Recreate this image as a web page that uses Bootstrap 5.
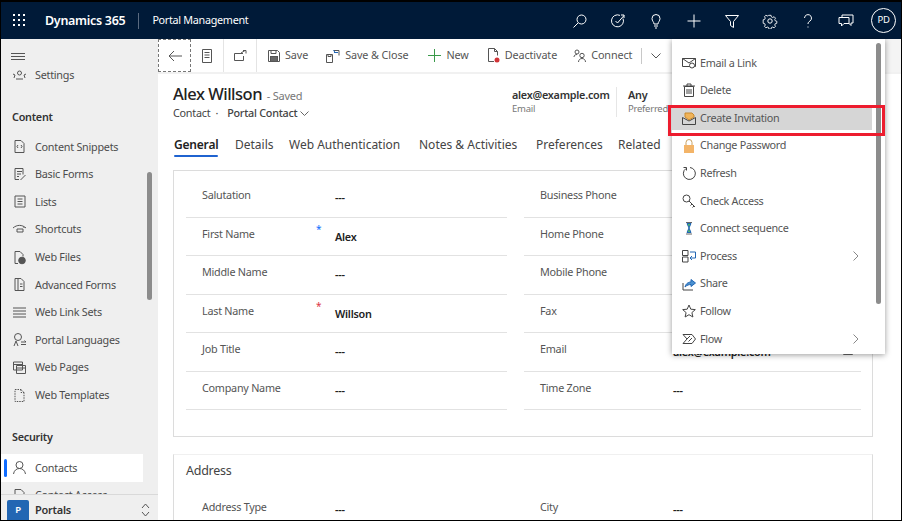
<!DOCTYPE html>
<html lang="en"><head><meta charset="utf-8"><title>Contact</title>
<link href="https://cdn.jsdelivr.net/npm/bootstrap@5.3.0/dist/css/bootstrap.min.css" rel="stylesheet">
<style>
html,body{height:100%;margin:0;overflow:hidden}
body{font-family:"Noto Sans","Open Sans",sans-serif;font-size:11px;color:#444;background:#000;letter-spacing:-.25px}
svg{display:block;flex:none;fill:none;stroke:currentColor;stroke-width:1}
.app-frame{position:relative;width:900px;height:518px;margin:2px 0 0 1px;background:#fff;overflow:hidden;display:flex;flex-direction:column}
.top-bar{height:37px;background:#001a38;color:#fff;flex:none;padding-left:12px}
.waffle{width:13px;height:13px;margin-right:19px}
.brand{font-size:12.5px;font-weight:600;padding-right:13px;border-right:1px solid #5a6a80;line-height:16px;letter-spacing:-.3px}
.app-name{font-size:10.8px;padding-left:13px;letter-spacing:-.3px}
.top-icons{margin-left:auto;padding-right:5px}
.top-btn{width:38px;display:flex;justify-content:center;color:#fff}
.avatar{width:25px;height:25px;border:1px solid #fff;border-radius:50%;font-size:9.5px;margin-left:6px}
.body-row{flex:1;min-height:0}
.side-nav{width:157px;background:#efefef;flex:none;position:relative;display:flex;flex-direction:column}
.burger{height:31px;padding:14px 0 0 10px;flex:none;color:#555;background:#efefef}
.nav-scroll{flex:1;min-height:0;overflow:hidden}
.nav-row{height:27.6px;display:flex;align-items:center;padding-left:11px;color:#4c4c4c;font-size:10.8px;gap:8px;width:142px;position:relative}
.nav-row svg{width:15px;height:15px;color:#555}
.nav-head{font-weight:600;color:#333;font-size:10.8px;padding-left:11px;height:14px;line-height:14px}
.mt-head-a{margin-top:22px;margin-bottom:9px}
.mt-head-b{margin-top:21px;margin-bottom:10px}
.nav-active{background:#fff}
.nav-active::before{content:"";position:absolute;left:3px;top:5px;bottom:5px;width:3px;background:#0f6cff;border-radius:2px}
.settings-row{margin-top:-8px;height:26px}
.side-foot{height:26px;flex:none;border-top:1px solid #d9d9d9;background:#efefef;display:flex;align-items:flex-end;padding-left:6px;font-weight:600;font-size:11px;color:#333}
.foot-label{line-height:20px}
.area-tile{width:22px;height:20px;background:#2266b3;color:#fff;font-size:9.5px;display:flex;align-items:center;justify-content:center;border-radius:2px 2px 0 0;margin-right:6px}
.foot-chev{margin-left:auto;margin-right:8px;margin-bottom:3px;color:#555}
.side-thumb{position:absolute;left:146px;top:133px;width:5px;height:128px;background:#8c8c8c;border-radius:3px}
.main-pane{flex:1;min-width:0;position:relative;background:#fff}
.cmd-bar{height:33px;border-bottom:2px solid #f1f1f1;box-sizing:content-box;color:#555;font-size:10.8px;letter-spacing:-.1px}
.cmd-icon{width:33px;height:33px;border-right:1px solid #e4e4e4;justify-content:center;align-items:center;display:flex}
.cmd-back{border:1px dashed #777}
.cmd-item{display:flex;align-items:center;gap:5px;white-space:nowrap;margin-left:18px}
.cmd-first{margin-left:11px}
.cmd-new{margin-left:20px}
.cmd-conn{margin-left:16px}
.cmd-sep{margin-left:9px;width:1px;height:16px;background:#c8c8c8}
.cmd-chev{margin-left:9px}
.rec-head{padding:9px 0 0 15px;height:60px;position:relative}
.rec-title{font-size:16.5px;font-weight:500;color:#222;line-height:22px;letter-spacing:-.5px}
.rec-saved{font-size:11px;color:#777;font-weight:400;margin-left:1px;letter-spacing:-.25px}
.rec-sub{font-size:10.8px;color:#444;line-height:16px;margin-top:-2px}
.rec-form-name{margin-left:4px;font-weight:500}
.rec-fields{position:absolute;left:354px;top:13px;display:flex}
.rec-mail{width:105px;border-right:1px solid #e6e6e6;height:30px}
.rec-pref{padding-left:11px}
.rec-val{font-weight:600;font-size:10.8px;color:#333;line-height:15px}
.rec-lab{font-size:9.5px;color:#777;line-height:13px}
.chev-sub{display:inline-block;vertical-align:1px;color:#666}
.tab-row{height:26px;padding-left:16px;font-size:12px;color:#444;position:relative;white-space:nowrap;line-height:21px;letter-spacing:0}
.tab-on{font-weight:600;color:#222;height:23px;width:44px;position:relative;letter-spacing:-.2px}
.tab-on::after{content:"";position:absolute;left:0;right:0;bottom:0;height:2px;background:#1f63d0;border-radius:1px}
.tab-a{margin-left:17px;width:54px}.tab-b{width:130px}.tab-c{width:117px}.tab-d{width:82px}
.form-area{padding:10px 28px 0 15px}
.form-box{border:1px solid #dcdcdc;display:flex;gap:17px;padding:8px 12px 26px 12px;height:267px}
.col-left{flex:none;width:321px}
.col-right{flex:none;width:337px}
.form-row{height:38.5px;border-bottom:1px solid #e2e2e2;display:flex;padding-top:8px;font-size:10.8px;color:#555;position:relative}
.form-lab{width:149px;padding-left:16px;flex:none;line-height:16px}
.form-val{color:#222;font-weight:600;padding-top:3px;line-height:16px}
.req{position:absolute;left:130px;top:4px;font-size:10px;line-height:14px}
.mail-ico{margin:6px 8px 0 auto;color:#666}
.addr-box{margin-top:17px;border:1px solid #dcdcdc;border-top-color:#f0f0f0;height:80px;padding:7px 12px}
.addr-title{font-size:12.5px;color:#444;line-height:18px;margin-bottom:19px}
.addr-row{gap:17px;font-size:10.8px;color:#555}
.menu-pop{position:absolute;left:671px;top:37px;width:213px;height:315px;background:#fff;box-shadow:0 1px 6px rgba(0,0,0,.4);padding-top:10px;z-index:5;color:#555;font-size:10.8px;letter-spacing:-.3px}
.menu-row{height:27.6px;display:flex;align-items:center;padding-left:10px;gap:4px;width:200px;position:relative}
.menu-row svg.mi{width:14px;height:14px;color:#444}
.menu-sel{background:linear-gradient(#d6d6d6,#d6d6d6) no-repeat 0 50%/100% 24px}
.menu-hl{position:absolute;left:-4px;top:66px;width:217px;height:31px;border:3px solid #ed1c2e;z-index:6;pointer-events:none}
.menu-chev{position:absolute;right:13px;top:9px;color:#888}
.menu-thumb{position:absolute;left:204px;top:4px;width:5px;height:261px;background:#8c8c8c;border-radius:3px}
.right-strip{position:absolute;left:727px;top:0;width:20px;height:33px;background:#f4f4f4;z-index:1}
</style></head>
<body>
<div class="app-frame">
 <header class="top-bar d-flex align-items-center">
  <svg class="waffle" viewBox="0 0 13 13"><g fill="#fff" stroke="none"><rect x="0" y="0" width="2" height="2"/><rect x="5" y="0" width="2" height="2"/><rect x="10" y="0" width="2" height="2"/><rect x="0" y="5" width="2" height="2"/><rect x="5" y="5" width="2" height="2"/><rect x="10" y="5" width="2" height="2"/><rect x="0" y="10" width="2" height="2"/><rect x="5" y="10" width="2" height="2"/><rect x="10" y="10" width="2" height="2"/></g></svg>
  <span class="brand">Dynamics 365</span><span class="app-name">Portal Management</span>
  <div class="top-icons d-flex align-items-center">
   <span class="top-btn"><svg width="16" height="16" viewBox="0 0 16 16"><circle cx="9.500" cy="6.500" r="4.500"/><path d="M6 10l-4.500 4.500"/></svg></span>
   <span class="top-btn"><svg width="16" height="16" viewBox="0 0 16 16"><path d="M13 5.500A6 6 0 1 1 10 2.400"/><path d="M5.500 8l2 2L14 2.500"/><path d="M11 2h3v3"/></svg></span>
   <span class="top-btn"><svg width="16" height="16" viewBox="0 0 16 16"><path d="M6 11c0-2-2-3-2-5.500a4 4 0 0 1 8 0c0 2.500-2 3.500-2 5.500zM6 13h4M7 15h2"/></svg></span>
   <span class="top-btn"><svg width="16" height="16" viewBox="0 0 16 16"><path d="M8 1.500v13M1.500 8h13"/></svg></span>
   <span class="top-btn"><svg width="16" height="16" viewBox="0 0 16 16"><path d="M1.500 2.500h13L9.500 8.500v6l-3-2v-4z"/></svg></span>
   <span class="top-btn"><svg width="16" height="16" viewBox="0 0 16 16"><circle cx="8" cy="8" r="2.200"/><path d="M6.800 1.500h2.400l.4 1.800 1.500.7 1.600-.9 1.600 1.700-.9 1.500.6 1.500 1.800.5v2.300l-1.800.5-.6 1.500.9 1.500-1.600 1.700-1.600-.9-1.500.6-.4 1.800H6.800l-.4-1.800-1.500-.6-1.600.9-1.600-1.700.9-1.500-.6-1.500-1.800-.5V6.600l1.800-.5.600-1.500-.9-1.500 1.600-1.700 1.600.9 1.500-.7z" transform="translate(1 1) scale(.875)"/></svg></span>
   <span class="top-btn"><svg width="16" height="16" viewBox="0 0 16 16"><path d="M4.500 5a3.500 3.500 0 1 1 5.500 3C8.800 8.800 8 9.500 8 11M8 13.500v1"/></svg></span>
   <span class="top-btn"><svg width="16" height="16" viewBox="0 0 16 16" stroke-width="1.300"><path d="M4 4.500V2h11v8h-2v2.500L10.500 10"/><path d="M1 4.500h10v6H6L3.500 13v-2.500H1z"/></svg></span>
   <span class="avatar d-flex align-items-center justify-content-center">PD</span>
  </div>
 </header>
 <div class="body-row d-flex">
  <nav class="side-nav">
   <div class="burger"><svg width="14" height="7" viewBox="0 0 14 7"><path d="M0 .5h14M0 3.500h14M0 6.500h14"/></svg></div>
   <div class="nav-scroll">
    <div class="nav-row settings-row"><svg viewBox="0 0 15 15"><circle cx="7.500" cy="5" r="2"/><path d="M1 6l2 1-1 3M14 6l-2 1 1 3M4 11h7"/></svg>Settings</div>
    <div class="nav-head mt-head-a">Content</div>
    <div class="nav-row"><svg viewBox="0 0 15 15"><path d="M3 1.500h6l3 3v9H3zM6 6L5 7.500 6 9M9 6l1 1.500L9 9"/></svg>Content Snippets</div>
    <div class="nav-row"><svg viewBox="0 0 15 15"><path d="M3 1.500h8v6M3 1.500v11h4M5 4.500h5M5 7h4M5 9.500h2M8.500 13l5-5"/></svg>Basic Forms</div>
    <div class="nav-row"><svg viewBox="0 0 15 15"><path d="M3 2h10v11H3zM5.500 5h5M5.500 7.500h5M5.500 10h5"/></svg>Lists</div>
    <div class="nav-row"><svg viewBox="0 0 15 15"><path d="M1 6c4-3.500 9-3.500 13 0M5 7h6v3H5zM12 5v1"/></svg>Shortcuts</div>
    <div class="nav-row"><svg viewBox="0 0 15 15"><path d="M6 13.500H3v-12h5l3 3v2"/><circle cx="10" cy="10.500" r="3.300" fill="#555"/></svg>Web Files</div>
    <div class="nav-row"><svg viewBox="0 0 15 15"><path d="M3 1.500h6l3 3v9H3zM6 1.500v12M8 7h2.500M8 9.500h2.500"/></svg>Advanced Forms</div>
    <div class="nav-row"><svg viewBox="0 0 15 15"><path d="M1 3h13M1 6h13M1 9h13M1 12h13"/></svg>Web Link Sets</div>
    <div class="nav-row"><svg viewBox="0 0 15 15"><circle cx="6" cy="5" r="3.500"/><path d="M2 14l2-5 2 5M9 10h5M9 12.500h5M12.500 8.500l1.500 1.500"/></svg>Portal Languages</div>
    <div class="nav-row"><svg viewBox="0 0 15 15"><path d="M1.500 2h9v8h-9zM1.500 4.500h9M4.500 5.500h9v8h-9zM4.500 8h9"/></svg>Web Pages</div>
    <div class="nav-row"><svg viewBox="0 0 15 15"><path d="M3 1.500h6l3 3v9H3zM9 1.500v3h3" stroke-dasharray="1.500 1"/></svg>Web Templates</div>
    <div class="nav-head mt-head-b">Security</div>
    <div class="nav-row nav-active"><svg viewBox="0 0 15 15"><circle cx="7.500" cy="5" r="3.500"/><path d="M1.500 14c.5-3.500 3-5.500 6-5.500s5.500 2 6 5.500"/></svg>Contacts</div>
    <div class="nav-row"><svg viewBox="0 0 15 15"><path d="M3 1.500h6l3 3v9H3z"/></svg>Contact Access</div>
   </div>
   <div class="side-thumb"></div>
   <div class="side-foot"><span class="area-tile">P</span><span class="foot-label">Portals</span>
    <svg class="foot-chev" width="9" height="14" viewBox="0 0 9 14"><path d="M1 5l3.500-4L8 5M1 9l3.500 4L8 9"/></svg></div>
  </nav>
  <main class="main-pane">
   <div class="right-strip"></div>
   <div class="cmd-bar d-flex align-items-center">
    <span class="cmd-icon cmd-back"><svg width="14" height="12" viewBox="0 0 14 12"><path d="M14 6H1M6 1L1 6l5 5"/></svg></span>
    <span class="cmd-icon"><svg width="10" height="14" viewBox="0 0 10 14"><path d="M.5.500h9v13h-9zM2.500 3.500h5M2.500 6h5M2.500 8.500h5"/></svg></span>
    <span class="cmd-icon"><svg width="13" height="11" viewBox="0 0 13 11"><path d="M9 3.500H.5v7h9V6M7 3l4-2.500M9 .5h3v3"/></svg></span>
    <div class="cmd-item cmd-first"><svg width="12" height="12" viewBox="0 0 12 12"><path d="M.5.500h9l2 2v9H.5zM3 .5v3h5v-3"/><rect x="2.500" y="6.500" width="7" height="5" fill="#666"/></svg>Save</div>
    <div class="cmd-item"><svg width="14" height="14" viewBox="0 0 14 14"><path d="M.5 5.500h6v8h-6zM2 5.500v2h3v-2M8 1.500h5v5"/><path d="M8 3.500h4M7.500 1l1.500 2.500" stroke="#2266b3"/></svg>Save &amp; Close</div>
    <div class="cmd-item cmd-new"><svg width="13" height="13" viewBox="0 0 13 13"><path d="M6.500 0v13M0 6.500h13" stroke="#3a9a4a"/></svg>New</div>
    <div class="cmd-item"><svg width="13" height="15" viewBox="0 0 13 15"><path d="M7 13.500H1.500v-13h6l3 3v4M7.500.5v3h3"/><circle cx="10" cy="12" r="2.500" fill="#d13438" stroke="none"/></svg>Deactivate</div>
    <div class="cmd-item cmd-conn"><svg width="13" height="13" viewBox="0 0 13 13"><circle cx="4" cy="3" r="2"/><circle cx="9" cy="6.500" r="2.200"/><path d="M1 8c0-1.500 1-2.500 3-2.500M5.500 13c0-2 1.500-3.500 3.500-3.500s3.500 1.500 3.500 3.500"/></svg>Connect</div>
    <span class="cmd-sep"></span>
    <svg class="cmd-chev" width="10" height="6" viewBox="0 0 10 6"><path d="M.5.500L5 5 9.500.5"/></svg>
   </div>
   <div class="rec-head">
    <div class="rec-title">Alex Willson <span class="rec-saved">- Saved</span></div>
    <div class="rec-sub">Contact &nbsp;·&nbsp; <span class="rec-form-name">Portal Contact</span> <svg class="chev-sub" width="9" height="5" viewBox="0 0 9 5"><path d="M.5.500L4.500 4.500 8.500.5"/></svg></div>
    <div class="rec-fields">
     <div class="rec-mail"><div class="rec-val">alex@example.com</div><div class="rec-lab">Email</div></div>
     <div class="rec-pref"><div class="rec-val">Any</div><div class="rec-lab">Preferred</div></div>
    </div>
   </div>
   <div class="tab-row d-flex">
    <span class="tab-on">General</span>
    <span class="tab-a">Details</span>
    <span class="tab-b">Web Authentication</span>
    <span class="tab-c">Notes &amp; Activities</span>
    <span class="tab-d">Preferences</span>
    <span>Related</span>
   </div>
   <div class="form-area">
    <div class="form-box">
     <div class="col-left">
      <div class="form-row"><div class="form-lab">Salutation</div><div class="form-val">---</div></div>
      <div class="form-row"><div class="form-lab">First Name</div><span class="req text-primary">*</span><div class="form-val">Alex</div></div>
      <div class="form-row"><div class="form-lab">Middle Name</div><div class="form-val">---</div></div>
      <div class="form-row"><div class="form-lab">Last Name</div><span class="req text-danger">*</span><div class="form-val">Willson</div></div>
      <div class="form-row"><div class="form-lab">Job Title</div><div class="form-val">---</div></div>
      <div class="form-row"><div class="form-lab">Company Name</div><div class="form-val">---</div></div>
     </div>
     <div class="col-right">
      <div class="form-row"><div class="form-lab">Business Phone</div><div class="form-val">---</div></div>
      <div class="form-row"><div class="form-lab">Home Phone</div><div class="form-val">---</div></div>
      <div class="form-row"><div class="form-lab">Mobile Phone</div><div class="form-val">---</div></div>
      <div class="form-row"><div class="form-lab">Fax</div><div class="form-val">---</div></div>
      <div class="form-row"><div class="form-lab">Email</div><div class="form-val">alex@example.com</div><svg class="mail-ico" width="10" height="8" viewBox="0 0 10 8"><path d="M.5.500h9v7h-9zM.5.500L5 4 9.500.5"/></svg></div>
      <div class="form-row"><div class="form-lab">Time Zone</div><div class="form-val">---</div></div>
     </div>
    </div>
    <div class="addr-box">
     <div class="addr-title">Address</div>
     <div class="d-flex addr-row">
      <div class="d-flex col-left"><div class="form-lab">Address Type</div><div class="form-val">---</div></div>
      <div class="d-flex col-right"><div class="form-lab">City</div><div class="form-val">---</div></div>
     </div>
    </div>
   </div>
  </main>
 </div>
 <div class="menu-pop">
  <div class="menu-row"><svg class="mi" viewBox="0 0 14 14"><path d="M.5 2.500h13v8H.5zM.5 2.500L7 7l6.500-4.500"/><circle cx="10" cy="9.500" r="2.500" fill="#fff"/></svg>Email a Link</div>
  <div class="menu-row"><svg class="mi" viewBox="0 0 14 14"><path d="M2.500 3.500h9v10h-9zM1 3h12M5 3V1h4v2M5 6v5M7 6v5M9 6v5"/></svg>Delete</div>
  <div class="menu-row menu-sel"><svg class="mi" viewBox="0 0 14 14"><path d="M.5 6.500l6.500 3.500 6.500-3.500v7H.5z"/><path d="M3 6V2h7l2 2v2L7 9z" fill="#f0b45a" stroke="#c98a2e"/></svg>Create Invitation</div>
  <div class="menu-row"><svg class="mi" viewBox="0 0 14 14"><path d="M4 6V3.500a3 3 0 0 1 6 0V6" stroke="#c9a060"/><rect x="2" y="6" width="10" height="8" fill="#f3b468" stroke="none"/></svg>Change Password</div>
  <div class="menu-row"><svg class="mi" viewBox="0 0 14 14"><path d="M8 1.500a6 6 0 1 1-4 1M1.500 1.500h3v3"/></svg>Refresh</div>
  <div class="menu-row"><svg class="mi" viewBox="0 0 14 14"><circle cx="4.500" cy="4.500" r="3.500"/><path d="M7 7l6 6M10 10l-1.500 1.500M12 12l-1.500 1.500"/></svg>Check Access</div>
  <div class="menu-row"><svg class="mi" viewBox="0 0 14 14"><path d="M4 1.500h6M4 13h6" stroke="#666"/><path d="M5 2.500h4L7 7l2 4.500H5L7 7z" fill="#4cb26a" stroke="#2266b3"/></svg>Connect sequence</div>
  <div class="menu-row"><svg class="mi" viewBox="0 0 14 14"><path d="M.5 1.500h5.500v5H.5zM.5 8h5.500v5H.5z"/><path d="M8 3h5.500v6H8.500M10 7L8 9l2 2" stroke="#2266b3"/></svg>Process<svg class="menu-chev" width="6" height="10" viewBox="0 0 6 10"><path d="M.5.500L5 5 .5 9.500"/></svg></div>
  <div class="menu-row"><svg class="mi" viewBox="0 0 14 14"><path d="M1 6v7h10"/><path d="M3 10c1-4 4-5 6-5V2.500L13.500 6 9 9.500V7.500c-2 0-4 .500-6 2.500z" fill="#4a90d0" stroke="#2266b3"/></svg>Share</div>
  <div class="menu-row"><svg class="mi" viewBox="0 0 14 14"><path d="M7 1l1.800 4.200 4.500.4-3.400 3 1 4.400L7 10.700 3.100 13l1-4.400-3.400-3 4.500-.4z"/></svg>Follow</div>
  <div class="menu-row"><svg class="mi" viewBox="0 0 14 14"><path d="M1 2.500h9L13.500 7 10 11.500H1L5 7zM5 7l3-3M6.500 9.500L10 6"/></svg>Flow<svg class="menu-chev" width="6" height="10" viewBox="0 0 6 10"><path d="M.5.500L5 5 .5 9.500"/></svg></div>
  <div class="menu-thumb"></div>
  <div class="menu-hl"></div>
 </div>
</div>
</body></html>
